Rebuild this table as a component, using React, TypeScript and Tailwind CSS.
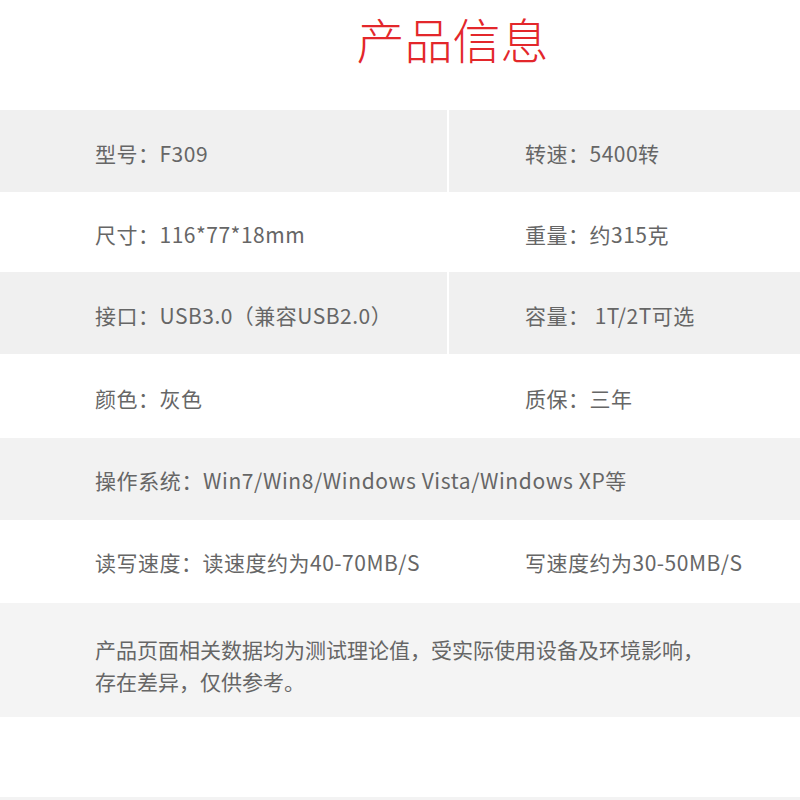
const rows = [
  { h: "h-[82px]", bg: "bg-[#f0f0f0]", left: "型号：F309", right: "转速：5400转" },
  { h: "h-[80px]", bg: "bg-white", left: "尺寸：116*77*18mm", right: "重量：约315克" },
  { h: "h-[82px]", bg: "bg-[#f0f0f0]", left: "接口：USB3.0（兼容USB2.0）", right: "容量： 1T/2T可选" },
  { h: "h-[84px]", bg: "bg-white", left: "颜色：灰色", right: "质保：三年" },
];

export default function App() {
  return (
    <div
      className="w-[800px] h-[800px] bg-white flex flex-col text-[#666] text-[21px]"
      style={{ fontFamily: '"Noto Sans CJK SC", "Noto Sans", sans-serif' }}
    >
      {/* Title */}
      <div className="h-[110px] pt-[14px] pl-[105px] text-center">
        <h1 className="text-[48px] leading-[48px] text-[#e3272b] font-light">产品信息</h1>
      </div>

      {/* Two-column spec rows */}
      {rows.map((row, i) => (
        <div key={i} className={`flex tracking-[0.5px] ${row.h} ${row.bg}`}>
          <div className="w-[447px] flex items-center pt-[6px] pl-[95px]">{row.left}</div>
          <div className="flex-1 flex items-center pt-[6px] pl-[76px] border-l-2 border-white">{row.right}</div>
        </div>
      ))}

      {/* OS row */}
      <div className="h-[82px] bg-[#f2f2f2] flex items-center pt-[4px] pl-[95px] tracking-[0.6px]">
        操作系统：Win7/Win8/Windows Vista/Windows XP等
      </div>

      {/* Speed row */}
      <div className="h-[83px] bg-white flex items-center pt-[2px] tracking-[0.5px]">
        <div className="w-[447px] pl-[95px]">读写速度：读速度约为40-70MB/S</div>
        <div className="flex-1 pl-[78px]">写速度约为30-50MB/S</div>
      </div>

      {/* Disclaimer */}
      <div className="h-[114px] bg-[#f4f4f4] flex flex-col justify-center pt-[9px] pl-[95px] leading-[32px]">
        <p>产品页面相关数据均为测试理论值，受实际使用设备及环境影响，</p>
        <p>存在差异，仅供参考。</p>
      </div>

      <div className="flex-1" />
      <div className="h-[3px] bg-[#f3f3f3]" />
    </div>
  );
}
